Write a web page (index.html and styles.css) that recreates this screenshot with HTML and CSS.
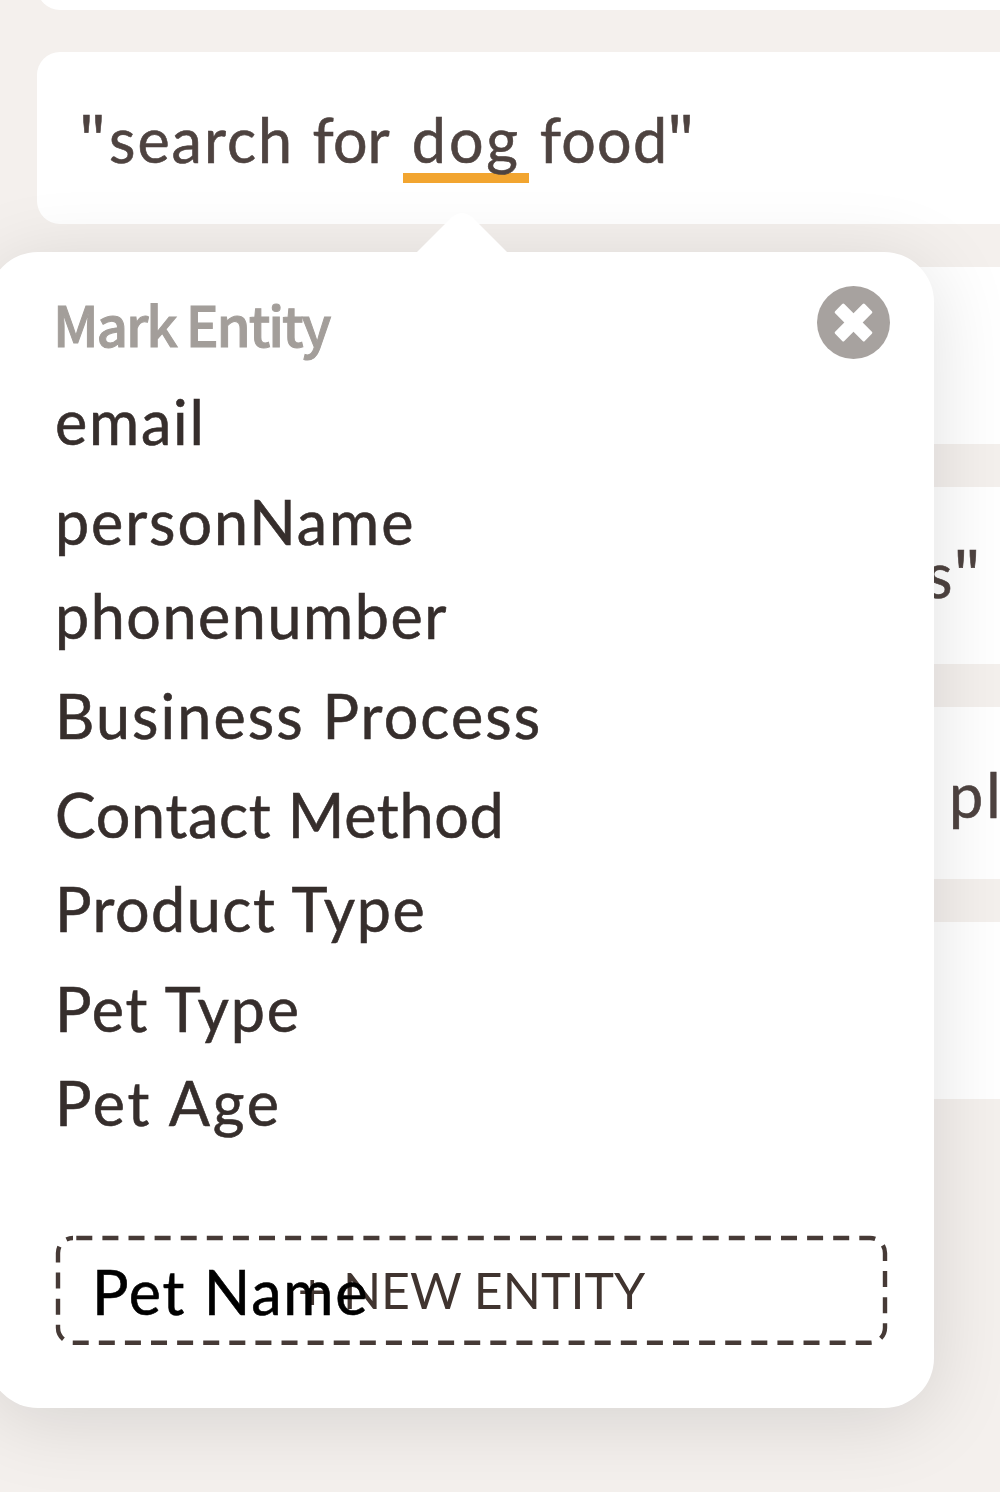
FILE: index.html
```
<!DOCTYPE html>
<html lang="en">
<head>
    <meta charset="UTF-8">
    <meta name="viewport" content="width=device-width, initial-scale=1.0">
    <title>Mark Entity</title>
    <link rel="stylesheet" href="styles.css">
</head>
<body>
    <div class="card card-first"></div>

    <div class="card">
        <span class="quote">"</span>
        <span class="word-search">search</span>
        <span class="word-for">for</span>
        <span class="marked">dog</span>
        <span class="word-food">food</span>
        <span class="quote">"</span>
    </div>

    <div class="card card-tall"></div>

    <div class="card card-tall card-s">
        <span>s</span>
        <span class="quote">"</span>
    </div>

    <div class="card card-pl">
        <span>pl</span>
    </div>

    <div class="card card-tall"></div>

    <div class="popover">
        <svg class="arrow" width="92" height="41" viewBox="0 0 92 41">
            <path d="M0 41 L36 5 Q46 -3 56 5 L92 41 Z" fill="#fff"/>
        </svg>

        <div class="popover-head">
            <h2>Mark Entity</h2>
            <svg class="close" width="73" height="73" viewBox="0 0 73 73">
                <circle cx="36.5" cy="36.5" r="36.5" fill="#a7a29f"/>
                <g fill="#fff" transform="rotate(45 36.5 36.5)">
                    <rect x="15.5" y="30" width="42" height="13" rx="1.5"/>
                    <rect x="30" y="15.5" width="13" height="42" rx="1.5"/>
                </g>
            </svg>
        </div>

        <ul class="entities">
            <li class="email">email</li>
            <li class="person">personName</li>
            <li class="phone">phonenumber</li>
            <li class="business">Business Process</li>
            <li class="contact">Contact Method</li>
            <li class="product">Product Type</li>
            <li class="pet-type">Pet Type</li>
            <li class="pet-age">Pet Age</li>
        </ul>

        <div class="new-entity">
            <svg class="dashes" width="833" height="110" viewBox="0 0 833 110">
                <rect x="3" y="3" width="827" height="104.7" rx="15" fill="none" stroke="#463a36" stroke-width="4.4" stroke-dasharray="16 10.1" stroke-dashoffset="-3.3"/>
            </svg>
            <div class="label"><span class="plus">+</span>NEW ENTITY</div>
            <div class="typed">Pet Name</div>
        </div>
    </div>
</body>
</html>
```
FILE: styles.css
```
*{
    padding: 0;
    margin: 0;
    box-sizing: border-box;
}
body{
    display: flow-root;
    position: relative;
    height: 1492px;
    overflow: hidden;
    background-color: #f4f0ed;
    font-family: Lato, "Noto Sans", sans-serif;
    font-size: 61px;
}

/* utterance cards */
.card{
    display: flex;
    height: 172px;
    margin-left: 37px;
    margin-bottom: 43px;
    padding-left: 41px;
    border-radius: 23px 0 0 23px;
    background-color: #fff;
    color: #4e4340;
    line-height: 175px;
    white-space: nowrap;
    -webkit-text-stroke: 0.6px #4e4340;
}
.card-first{
    margin-top: -162px;
    margin-bottom: 42px;
}
.card-tall{
    height: 177px;
}
.card-s{
    padding-left: 889px;
}
.card-pl{
    padding-left: 912px;
    letter-spacing: 3px;
}
.quote{
    font-family: "Noto Sans CJK SC", sans-serif;
    line-height: 167px;
    width: 31px;
    letter-spacing: 0;
}
.word-search{
    letter-spacing: 2px;
    margin-right: 18.5px;
}
.word-for{
    margin-right: 13px;
}
.marked{
    width: 126px;
    padding-left: 9px;
    margin-right: 11px;
    letter-spacing: 3px;
    background: linear-gradient(#f2a530, #f2a530) no-repeat 0 121px / 100% 10px;
}
.word-food{
    letter-spacing: 1.2px;
    margin-right: -2px;
}

/* popover */
.popover{
    position: absolute;
    top: 252px;
    left: -12px;
    width: 946px;
    height: 1156px;
    padding: 34px 44px 0 67px;
    border-radius: 50px;
    background-color: #fff;
    box-shadow: 0 12px 80px rgba(0, 0, 0, 0.125);
}
.arrow{
    position: absolute;
    top: -40px;
    left: 428px;
}
.popover-head{
    display: flex;
    justify-content: space-between;
    height: 74px;
    margin-bottom: 15px;
}
.popover-head h2{
    font-family: "Noto Sans CJK SC", sans-serif;
    font-size: 55px;
    font-weight: 500;
    line-height: 75px;
    letter-spacing: -2.2px;
    color: #a39e9a;
    margin-left: -2px;
    -webkit-text-stroke: 1px #a39e9a;
}
.entities{
    list-style: none;
    line-height: 94px;
    color: #362e2c;
    -webkit-text-stroke: 0.6px #362e2c;
}
.email{
    letter-spacing: 1.8px;
}
.person{
    padding-top: 6px;
    letter-spacing: 1.9px;
}
.phone{
    letter-spacing: 1.56px;
}
.business{
    padding-top: 6px;
    letter-spacing: 2.1px;
}
.contact{
    padding-top: 5px;
    letter-spacing: 0.7px;
}
.product{
    letter-spacing: 1.5px;
}
.pet-type{
    padding-top: 6px;
    letter-spacing: 1.8px;
}
.pet-age{
    letter-spacing: 2.8px;
}

/* dashed box, the typed name runs over the label */
.new-entity{
    position: relative;
    width: 833px;
    height: 110px;
    margin-top: 85px;
}
.dashes{
    position: absolute;
    top: 0;
    left: 0;
}
.label{
    font-size: 50px;
    line-height: 110px;
    text-align: center;
    color: #40342f;
}
.plus{
    margin-right: 16px;
}
.typed{
    position: absolute;
    top: 0;
    left: 37px;
    line-height: 113px;
    letter-spacing: 1.8px;
    color: #000;
    -webkit-text-stroke: 0.6px #000;
}
```
